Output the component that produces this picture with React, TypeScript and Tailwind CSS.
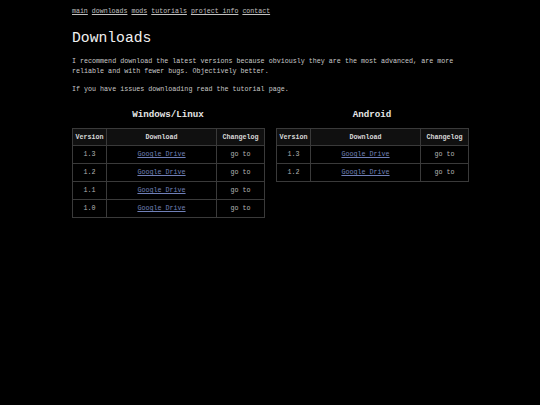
import React from "react";

const navLinks = ["main", "downloads", "mods", "tutorials", "project info", "contact"];

type Platform = { name: string; versions: string[] };

const platforms: Platform[] = [
  { name: "Windows/Linux", versions: ["1.3", "1.2", "1.1", "1.0"] },
  { name: "Android", versions: ["1.3", "1.2"] },
];

function DownloadTable({ platform }: { platform: Platform }) {
  return (
    <div className="w-[192px]">
      <h2 className="text-center text-[9.2px] font-bold text-[#e6e6e6] leading-[12px] mb-[7px]">
        {platform.name}
      </h2>
      <table className="w-[192px] border-collapse table-fixed text-[6.7px]">
        <colgroup>
          <col className="w-[34px]" />
          <col className="w-[110px]" />
          <col className="w-[48px]" />
        </colgroup>
        <thead>
          <tr className="h-[17px] bg-[#101010]">
            <th className="border border-[#3a3a3a] font-bold text-[#d8d8d8]">Version</th>
            <th className="border border-[#3a3a3a] font-bold text-[#d8d8d8]">Download</th>
            <th className="border border-[#3a3a3a] font-bold text-[#d8d8d8]">Changelog</th>
          </tr>
        </thead>
        <tbody>
          {platform.versions.map((v) => (
            <tr key={v} className="h-[18px]">
              <td className="border border-[#3a3a3a] text-center text-[#b5b5b5]">{v}</td>
              <td className="border border-[#3a3a3a] text-center">
                <a href="#" className="text-[#7080b8] underline">
                  Google Drive
                </a>
              </td>
              <td className="border border-[#3a3a3a] text-center text-[#b5b5b5]">go to</td>
            </tr>
          ))}
        </tbody>
      </table>
    </div>
  );
}

export default function App() {
  return (
    <div className="min-h-[405px] w-full bg-black font-['Liberation_Mono',monospace] text-[#c8c8c8] antialiased">
      <div className="pl-[72px] pt-[7px]">
        {/* Nav */}
        <nav className="flex gap-[4px] text-[6.6px] leading-[9px]">
          {navLinks.map((l) => (
            <a key={l} href="#" className="text-[#c0c0c0] underline">
              {l}
            </a>
          ))}
        </nav>

        <h1 className="mt-[14px] text-[14.7px] leading-[17px] text-[#f0f0f0]">Downloads</h1>

        <p className="mt-[9px] w-[400px] text-[6.7px] leading-[10px] text-[#c8c8c8]">
          I recommend download the latest versions because obviously they are the most advanced, are more reliable and with fewer bugs. Objectively better.
        </p>
        <p className="mt-[8px] text-[6.7px] leading-[10px] text-[#c8c8c8]">
          If you have issues downloading read the tutorial page.
        </p>

        <div className="mt-[15px] flex gap-[12px] items-start">
          {platforms.map((p) => (
            <DownloadTable key={p.name} platform={p} />
          ))}
        </div>
      </div>
    </div>
  );
}
